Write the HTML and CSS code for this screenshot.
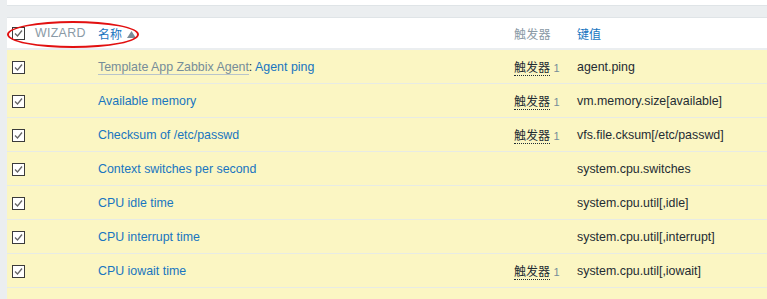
FILE: index.html
```html
<!DOCTYPE html>
<html>
<head>
<meta charset="utf-8">
<link rel="stylesheet" href="styles.css">
</head>
<body>
<div class="page">
  <div class="topbox"></div>
  <div class="tablewrap">
    <table class="list">
      <colgroup>
        <col class="c-check"><col class="c-wiz"><col class="c-name"><col class="c-trig"><col class="c-key">
      </colgroup>
      <thead>
        <tr>
          <th><span class="cb"><svg width="13" height="13" viewBox="0 0 13 13"><rect x="0.5" y="0.5" width="12" height="12" fill="#fff" stroke="#3b3b3b"/><path d="M3 6.5 L5.5 9 L10 3.5" fill="none" stroke="#666" stroke-width="1.3"/></svg></span></th>
          <th class="muted">WIZARD</th>
          <th class="link cjk">名称<svg class="arrow" width="9" height="7" viewBox="0 0 9 7"><path d="M0 7 L4.5 0 L9 7 Z" fill="#7a8c98"/></svg></th>
          <th class="muted cjk">触发器</th>
          <th class="link cjk">键值</th>
        </tr>
      </thead>
      <tbody>
        <tr>
          <td><span class="cb"><svg width="13" height="13" viewBox="0 0 13 13"><rect x="0.5" y="0.5" width="12" height="12" fill="#fff" stroke="#3b3b3b"/><path d="M3 6.5 L5.5 9 L10 3.5" fill="none" stroke="#666" stroke-width="1.3"/></svg></span></td>
          <td></td>
          <td><span class="tpl">Template App Zabbix Agent</span><span class="sep">:</span> <span class="link">Agent ping</span></td>
          <td><span class="trig">触发器</span> <sup class="cnt">1</sup></td>
          <td>agent.ping</td>
        </tr>
        <tr>
          <td><span class="cb"><svg width="13" height="13" viewBox="0 0 13 13"><rect x="0.5" y="0.5" width="12" height="12" fill="#fff" stroke="#3b3b3b"/><path d="M3 6.5 L5.5 9 L10 3.5" fill="none" stroke="#666" stroke-width="1.3"/></svg></span></td>
          <td></td>
          <td><span class="link">Available memory</span></td>
          <td><span class="trig">触发器</span> <sup class="cnt">1</sup></td>
          <td>vm.memory.size[available]</td>
        </tr>
        <tr>
          <td><span class="cb"><svg width="13" height="13" viewBox="0 0 13 13"><rect x="0.5" y="0.5" width="12" height="12" fill="#fff" stroke="#3b3b3b"/><path d="M3 6.5 L5.5 9 L10 3.5" fill="none" stroke="#666" stroke-width="1.3"/></svg></span></td>
          <td></td>
          <td><span class="link">Checksum of /etc/passwd</span></td>
          <td><span class="trig">触发器</span> <sup class="cnt">1</sup></td>
          <td>vfs.file.cksum[/etc/passwd]</td>
        </tr>
        <tr>
          <td><span class="cb"><svg width="13" height="13" viewBox="0 0 13 13"><rect x="0.5" y="0.5" width="12" height="12" fill="#fff" stroke="#3b3b3b"/><path d="M3 6.5 L5.5 9 L10 3.5" fill="none" stroke="#666" stroke-width="1.3"/></svg></span></td>
          <td></td>
          <td><span class="link">Context switches per second</span></td>
          <td></td>
          <td>system.cpu.switches</td>
        </tr>
        <tr>
          <td><span class="cb"><svg width="13" height="13" viewBox="0 0 13 13"><rect x="0.5" y="0.5" width="12" height="12" fill="#fff" stroke="#3b3b3b"/><path d="M3 6.5 L5.5 9 L10 3.5" fill="none" stroke="#666" stroke-width="1.3"/></svg></span></td>
          <td></td>
          <td><span class="link">CPU idle time</span></td>
          <td></td>
          <td>system.cpu.util[,idle]</td>
        </tr>
        <tr>
          <td><span class="cb"><svg width="13" height="13" viewBox="0 0 13 13"><rect x="0.5" y="0.5" width="12" height="12" fill="#fff" stroke="#3b3b3b"/><path d="M3 6.5 L5.5 9 L10 3.5" fill="none" stroke="#666" stroke-width="1.3"/></svg></span></td>
          <td></td>
          <td><span class="link">CPU interrupt time</span></td>
          <td></td>
          <td>system.cpu.util[,interrupt]</td>
        </tr>
        <tr>
          <td><span class="cb"><svg width="13" height="13" viewBox="0 0 13 13"><rect x="0.5" y="0.5" width="12" height="12" fill="#fff" stroke="#3b3b3b"/><path d="M3 6.5 L5.5 9 L10 3.5" fill="none" stroke="#666" stroke-width="1.3"/></svg></span></td>
          <td></td>
          <td><span class="link">CPU iowait time</span></td>
          <td><span class="trig">触发器</span> <sup class="cnt">1</sup></td>
          <td>system.cpu.util[,iowait]</td>
        </tr>
        <tr>
          <td></td><td></td><td></td><td></td><td></td>
        </tr>
      </tbody>
    </table>
    <div class="ellipse"></div>
  </div>
</div>
</body>
</html>
```
FILE: styles.css
```css
html, body {
  margin: 0;
  padding: 0;
  background: #ebeef0;
  overflow: hidden;
}
.page {
  padding-left: 7px;
  font-family: Arial, "Liberation Sans", "Noto Sans CJK SC", sans-serif;
  font-size: 12.4px;
  color: #1f2c33;
}
.cjk, .trig { font-size: 12px; }
.topbox {
  height: 5px;
  background: #fff;
  border-bottom: 1px solid #dfe4e7;
}
.tablewrap {
  position: relative;
  margin-top: 11px;
}
.list {
  width: 100%;
  border-collapse: collapse;
  table-layout: fixed;
  background: #fff;
  border-top: 1px solid #dfe4e7;
}
.c-check { width: 23px; }
.c-wiz { width: 63px; }
.c-name { width: 416px; }
.c-trig { width: 63px; }
.list th {
  height: 30px;
  padding: 0 0 0 5px;
  text-align: left;
  font-weight: normal;
  vertical-align: middle;
  border-bottom: 2px solid #ebeef0;
  white-space: nowrap;
}
.list td {
  height: 33px;
  padding: 0 0 0 5px;
  background: #fbf6c3;
  border-bottom: 1px solid #e7ebe4;
  vertical-align: middle;
  white-space: nowrap;
}
.cb {
  display: inline-block;
  width: 13px;
  height: 13px;
  vertical-align: middle;
  line-height: 0;
}
.cb svg { display: block; }
.muted { color: #8a9aa6; letter-spacing: 0.3px; }
.link { color: #1875c0; }
.arrow {
  vertical-align: 1px;
  margin-left: 5px;
}
.tpl {
  color: #768d99;
  border-bottom: 1px solid #b8c4cb;
}
.sep { color: #1f2c33; }
.trig {
  color: #1f2c33;
  border-bottom: 1px dotted #1f2c33;
}
.cnt {
  color: #768d99;
  font-size: 11px;
  vertical-align: 0;
}
.ellipse {
  position: absolute;
  left: 0;
  top: 4px;
  width: 128px;
  height: 23px;
  border: 2px solid #e21010;
  border-radius: 50%;
  pointer-events: none;
}
```
